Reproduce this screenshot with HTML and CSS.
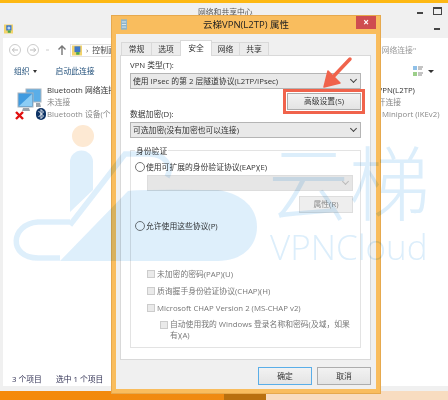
FILE: index.html
```html
<!DOCTYPE html>
<html lang="zh-CN">
<head>
  <meta charset="UTF-8" />
  <meta name="viewport" content="width=device-width, initial-scale=1.0"/>
  <title>云梯VPN(L2TP) 属性</title>
  <link rel="stylesheet" href="styles.css">
</head>
<body>
<div class="screen">

  <!-- explorer window behind the dialog -->
  <div class="explorer">
    <div class="title-row">
      <span class="title-text">网络和共享中心</span>
      <span class="win-min"></span>
      <span class="win-max"></span>
    </div>
    <div class="icon-row">
      <svg class="net-small" width="9" height="10" viewBox="0 0 12 12">
        <rect x="0" y="0" width="12" height="12" fill="#f3d36b"/>
        <rect x="3" y="1" width="7" height="7" fill="#3f78c8"/>
        <circle cx="6.5" cy="4.5" r="2" fill="#b7d7f3"/>
        <rect x="5" y="8" width="4" height="3" fill="#4aa84a"/>
      </svg>
      <span class="row-min"></span>
    </div>
    <div class="pane">
      <div class="nav-row">
        <svg width="62" height="14" viewBox="0 0 62 14" class="nav-btns">
          <circle cx="7" cy="7" r="5.5" fill="none" stroke="#ccc"/>
          <path d="M10 7H4.5M6.5 4.8 4.3 7l2.2 2.2" fill="none" stroke="#bbb"/>
          <circle cx="25" cy="7" r="5.5" fill="none" stroke="#ccc"/>
          <path d="M22 7h5.5M25.5 4.8 27.7 7l-2.200 2.200" fill="none" stroke="#bbb"/>
          <path d="M38 7h3" stroke="#ccc"/>
          <path d="M54 12V3M50.500 6.500 54 3l3.500 3.500" fill="none" stroke="#777" stroke-width="1.400"/>
        </svg>
        <div class="address">
          <svg width="10" height="11" viewBox="0 0 12 12">
            <rect x="0" y="0" width="12" height="12" fill="#f3d36b"/>
            <rect x="3" y="1" width="7" height="7" fill="#3f78c8"/>
            <rect x="5" y="8" width="4" height="3" fill="#4aa84a"/>
          </svg>
          <span class="crumb">›</span>
          <span>控制面板</span>
        </div>
        <div class="search">搜索"网络连接"</div>
      </div>
      <div class="tool-row">
        <span class="tool">组织 <i class="caret"></i></span>
        <span class="tool">启动此连接</span>
        <svg class="view-icon" width="22" height="11" viewBox="0 0 22 11">
          <rect x="0" y="0" width="4" height="4" fill="#8fc0e8"/>
          <rect x="0" y="6" width="4" height="4" fill="#9ccf8a"/>
          <path d="M5 1h5M5 3h4M5 7h5M5 9h4" stroke="#888"/>
          <path d="M15 4h6l-3 3z" fill="#333"/>
        </svg>
      </div>
      <div class="list">
        <div class="item">
          <svg class="item-icon" width="32" height="32" viewBox="0 0 32 32">
            <rect x="12" y="1" width="15" height="13" fill="#5aaee8" stroke="#aab4bd"/>
            <rect x="4" y="5" width="15" height="14" fill="#3f9be0" stroke="#aab4bd"/>
            <path d="M5 18 18 6v12z" fill="#8ccdf5"/>
            <path d="M9 20h6l1 3H8zM22 15h4l1 4h-5z" fill="#9aa3ab"/>
            <path d="M2 24l7 7M9 24l-7 7" stroke="#e01010" stroke-width="2.400"/>
            <rect x="22" y="20" width="10" height="12" rx="5" fill="#0f3466"/>
            <path d="M24.500 23l5 5-2.500 2.500v-9l2.500 2.500-5 5" fill="none" stroke="#fff" stroke-width=".9"/>
          </svg>
          <div class="item-text">
            <div class="item-name">Bluetooth 网络连接</div>
            <div class="item-sub">未连接</div>
            <div class="item-sub">Bluetooth 设备(个人区域网)</div>
          </div>
        </div>
        <div class="item-text item-right">
          <div class="item-name">云梯VPN(L2TP)</div>
          <div class="item-sub">已断开连接</div>
          <div class="item-sub">WAN Miniport (IKEv2)</div>
        </div>
      </div>
      <div class="status">
        <span>3 个项目</span>
        <span>选中 1 个项目</span>
      </div>
    </div>
  </div>

  <div class="desktop-strip">
    <div class="strip-orange"></div>
    <div class="strip-dark"></div>
    <div class="strip-peach"></div>
  </div>

  <!-- properties dialog -->
  <div class="dialog">
    <div class="dialog-title">
      <svg class="dialog-icon" width="6" height="11" viewBox="0 0 7 12">
        <rect width="7" height="12" fill="#8fb4c8"/>
        <path d="M1 3h5M1 6h5M1 9h5" stroke="#e4eef3"/>
      </svg>
      <span>云梯VPN(L2TP) 属性</span>
      <span class="close">×</span>
    </div>
    <div class="dialog-body">
      <div class="tabs">
        <span class="tab tab-a">常规</span>
        <span class="tab tab-b">选项</span>
        <span class="tab tab-active">安全</span>
        <span class="tab tab-c">网络</span>
        <span class="tab tab-d">共享</span>
      </div>
      <div class="panel">
        <div class="label">VPN 类型(T):</div>
        <div class="select">使用 IPsec 的第 2 层隧道协议(L2TP/IPsec)<i class="chev"></i></div>
        <div class="adv-row"><span class="btn adv">高级设置(S)</span></div>
        <div class="label label-tight">数据加密(D):</div>
        <div class="select">可选加密(没有加密也可以连接)<i class="chev"></i></div>
        <div class="group">
          <div class="legend">身份验证</div>
          <div class="radio-row"><i class="radio"></i>使用可扩展的身份验证协议(EAP)(E)</div>
          <div class="select select-off"><i class="chev"></i></div>
          <div class="prop-row"><span class="btn btn-off">属性(R)</span></div>
          <div class="radio-row radio-second"><i class="radio"></i>允许使用这些协议(P)</div>
          <div class="checks">
            <div class="check-row"><i class="check"></i>未加密的密码(PAP)(U)</div>
            <div class="check-row"><i class="check"></i>质询握手身份验证协议(CHAP)(H)</div>
            <div class="check-row"><i class="check"></i>Microsoft CHAP Version 2 (MS-CHAP v2)</div>
            <div class="check-row check-sub"><i class="check"></i><span class="check-long">自动使用我的 Windows 登录名称和密码(及域，如果有)(A)</span></div>
          </div>
        </div>
      </div>
      <div class="dialog-foot">
        <span class="btn btn-ok">确定</span>
        <span class="btn btn-cancel">取消</span>
      </div>
    </div>
  </div>

  <!-- watermark sits over everything -->
  <svg class="logo-mark" width="448" height="400" viewBox="0 0 448 400">
    <circle cx="83" cy="136" r="11" fill="#fde5cb"/>
    <path d="M70 212V162a11.500 11.500 0 0 1 23 0v28z" fill="#d9ecfb"/>
    <path d="M70 225 125 154h24c17 0 24 13 18 23M60 258H38C8 258 10 224 38 222h32" fill="none" stroke="#d9ecfb" stroke-width="5.500"/>
    <path d="M60 261 128 191q8-2 90-1c25 4 39 18 39 37 0 20-16 34-39 34z" fill="#d9ecfb"/>
  </svg>
  <div class="logo-text">
    <div class="logo-cn">云梯</div>
    <div class="logo-en">VPNCloud</div>
  </div>

  <svg class="arrow" width="448" height="400" viewBox="0 0 448 400">
    <path d="M350 59 331 79" stroke="#f0634c" stroke-width="3.500" stroke-linecap="round"/>
    <path d="M324 87 328 71 340 83z" fill="#f0634c" stroke="#f0634c" stroke-width="1.500" stroke-linejoin="round"/>
  </svg>
</div>
</body>
</html>
```

FILE: styles.css
```css
:root {
  --ui-font: "Open Sans", "Noto Sans CJK SC", sans-serif;
  --dialog-orange: #f9bd5e;
  --face: #f0f0f0;
  --line: #d9d9d9;
  --red: #f0634c;
}

html, body {
  margin: 0;
  padding: 0;
  overflow: hidden;
}

body {
  font-family: var(--ui-font);
  font-size: 7.800px;
  line-height: 12px;
  color: #333;
}

i {
  display: block;
  font-style: normal;
}

.screen {
  position: relative;
  width: 448px;
  height: 400px;
  overflow: hidden;
  background: #f8dcc0;
  filter: blur(0.35px);
}

/* explorer window */
.explorer {
  height: 388px;
  border-top: 3px solid #fdb813;
  background: var(--face);
  display: flex;
  flex-direction: column;
}

.title-row {
  height: 16px;
  box-sizing: border-box;
  padding-top: 2px;
  display: flex;
  align-items: center;
  padding-left: 198px;
  color: #555;
}

.win-min, .row-min {
  width: 6px;
  height: 2px;
  background: #444;
}

.win-min {
  margin-left: auto;
  margin-top: 2px;
}

.win-max {
  width: 7px;
  height: 5px;
  border: 1px solid #444;
  border-top-width: 2px;
  margin: 0 6px 2px 10px;
}

.icon-row {
  height: 19px;
  display: flex;
  align-items: center;
  padding: 0 8px 0 4px;
  justify-content: space-between;
}

.pane {
  flex: 1;
  margin: 0 0 5px 3px;
  background: #fff;
  display: flex;
  flex-direction: column;
  min-height: 0;
}

.nav-row {
  height: 22px;
  padding: 2px 0 0 5px;
  box-sizing: border-box;
  display: flex;
  align-items: center;
}

.address {
  width: 289px;
  height: 13px;
  box-sizing: border-box;
  border: 1px solid #e3e3e3;
  padding-left: 1px;
  display: flex;
  align-items: center;
  gap: 4px;
  flex: none;
  color: #444;
}

.crumb {
  color: #666;
}

.search {
  margin-left: 4px;
  color: #999;
  white-space: nowrap;
}

.tool-row {
  height: 22px;
  display: flex;
  align-items: center;
  padding-left: 11px;
  gap: 19px;
  color: #1f4e79;
}

.tool {
  display: flex;
  align-items: center;
  gap: 3px;
}

.caret {
  width: 0;
  height: 0;
  border: 2.500px solid transparent;
  border-top: 3px solid #333;
  border-bottom: 0;
}

.view-icon {
  margin-left: auto;
  margin-right: 13px;
}

.list {
  flex: 1;
  display: flex;
  padding-top: 3px;
}

.item {
  width: 359px;
  box-sizing: border-box;
  flex: none;
  display: flex;
  gap: 1px;
  padding-left: 11px;
}

.item-icon {
  flex: none;
  margin-top: 3px;
}

.item-text {
  white-space: nowrap;
}

.item-name {
  height: 11px;
  line-height: 11px;
  margin-bottom: 1px;
  color: #333;
}

.item-sub {
  color: #888;
  height: 11.500px;
  line-height: 11.500px;
}

.status {
  height: 14px;
  display: flex;
  align-items: center;
  gap: 14px;
  padding-left: 9px;
  color: #335;
}

.desktop-strip {
  display: flex;
  height: 9px;
}

.strip-orange {
  width: 224px;
  background: linear-gradient(90deg, #f58a0a, #ef8a12);
}

.strip-dark {
  width: 42px;
  background: #b9700f;
}

.strip-peach {
  flex: 1;
  background: #f8dcc0;
}

/* dialog */
.dialog {
  position: absolute;
  left: 111px;
  top: 15px;
  width: 270px;
  height: 379px;
  box-sizing: border-box;
  background: var(--dialog-orange);
  border: 1px solid #e6a94e;
  padding: 0 4px 4px;
  display: flex;
  flex-direction: column;
}

.dialog-title {
  height: 18px;
  flex: none;
  display: flex;
  align-items: center;
  justify-content: center;
  position: relative;
  font-size: 9.500px;
  color: #222;
}

.dialog-icon {
  position: absolute;
  left: 5px;
  top: 3px;
}

.close {
  position: absolute;
  right: 0;
  top: 0;
  width: 20px;
  height: 13px;
  line-height: 12px;
  text-align: center;
  background: #cf4d50;
  color: #fff;
  font-size: 10px;
  font-weight: bold;
}

.dialog-body {
  flex: 1;
  background: var(--face);
  padding: 8px 5px 0 4px;
  display: flex;
  flex-direction: column;
  min-height: 0;
}

.tabs {
  height: 13px;
  display: flex;
  align-items: flex-end;
  padding-left: 1px;
  flex: none;
  position: relative;
  z-index: 1;
}

.tab {
  box-sizing: border-box;
  height: 13px;
  line-height: 12px;
  text-align: center;
  background: #ececec;
  border: 1px solid var(--line);
  border-bottom: 0;
  margin-right: -1px;
}

.tab-a { width: 31px; }
.tab-b { width: 30px; }
.tab-c { width: 29px; }
.tab-d { width: 30px; }

.tab-active {
  width: 32px;
  height: 16px;
  line-height: 14px;
  background: #fff;
  margin-bottom: -1px;
  position: relative;
}

.panel {
  height: 305px;
  box-sizing: border-box;
  flex: none;
  background: #fff;
  border: 1px solid var(--line);
  padding: 3px 9px 0;
}

.label {
  height: 12px;
  margin-bottom: 2px;
  color: #333;
}

.label-tight {
  margin-top: -2px;
  margin-bottom: 2px;
}

.select {
  position: relative;
  height: 16px;
  line-height: 14px;
  box-sizing: border-box;
  background: #e9e9e9;
  border: 1px solid #b5b5b5;
  padding-left: 2px;
  white-space: nowrap;
}

.chev {
  position: absolute;
  right: 4px;
  top: 3px;
  width: 4px;
  height: 4px;
  border-right: 1.500px solid #444;
  border-bottom: 1.500px solid #444;
  transform: rotate(45deg);
}

.adv-row {
  display: flex;
  justify-content: flex-end;
  margin-top: 4px;
}

.btn {
  display: block;
  box-sizing: border-box;
  text-align: center;
  background: linear-gradient(#f2f2f2, #e4e4e4);
  border: 1px solid #adadad;
  color: #333;
}

.adv {
  width: 74px;
  height: 17px;
  line-height: 15px;
  outline: 3px solid var(--red);
  outline-offset: 1px;
}

.group {
  position: relative;
  height: 198px;
  box-sizing: border-box;
  margin-top: 12px;
  border: 1px solid #e3e3e3;
  padding: 10px 7px 0 4px;
}

.legend {
  position: absolute;
  left: 4px;
  top: -6px;
  padding: 0 1px;
  background: #fff;
}

.radio-row {
  display: flex;
  align-items: center;
  height: 12px;
  gap: 1px;
}

.radio {
  width: 8px;
  height: 8px;
  border: 1px solid #777;
  border-radius: 50%;
  background: #fff;
}

.select-off {
  margin: 2px 0 0 12px;
  background: #e6e6e6;
  border-color: #ddd;
}

.select-off .chev {
  border-color: #bbb;
}

.prop-row {
  display: flex;
  justify-content: flex-end;
  margin-top: 5px;
}

.btn-off {
  width: 54px;
  height: 17px;
  line-height: 15px;
  color: #888;
  background: #eee;
  border-color: #ddd;
}

.radio-second {
  margin-top: 7px;
}

.checks {
  margin-top: 36px;
  padding-left: 12px;
  color: #777;
}

.check-row {
  display: flex;
  height: 17px;
  line-height: 12px;
  gap: 2px;
  align-items: flex-start;
}

.check {
  flex: none;
  width: 6px;
  height: 6px;
  margin-top: 2px;
  border: 1px solid #ccc;
  background: #eaeaea;
}

.check-sub {
  padding-left: 13px;
  height: 24px;
  line-height: 10.500px;
}

.check-long {
  width: 184px;
}

.dialog-foot {
  display: flex;
  justify-content: flex-end;
  gap: 5px;
  padding-top: 7px;
}

.btn-ok, .btn-cancel {
  width: 54px;
  height: 18px;
  line-height: 16px;
}

.btn-ok {
  border-color: #5aaee8;
}

/* watermark */
.logo-mark, .arrow {
  position: absolute;
  left: 0;
  top: 0;
  pointer-events: none;
}

.logo-mark {
  mix-blend-mode: multiply;
  opacity: 0.85;
}

.logo-text {
  position: absolute;
  left: 268px;
  top: 128px;
  color: #dceefb;
  mix-blend-mode: multiply;
  pointer-events: none;
}

.logo-cn {
  font-family: "Noto Sans CJK SC", sans-serif;
  font-weight: 300;
  font-size: 81px;
  line-height: 102px;
  white-space: nowrap;
}

.logo-en {
  font-family: "Open Sans", sans-serif;
  font-weight: 300;
  font-size: 35px;
  line-height: 34px;
  margin-left: 2px;
  white-space: nowrap;
}
```
